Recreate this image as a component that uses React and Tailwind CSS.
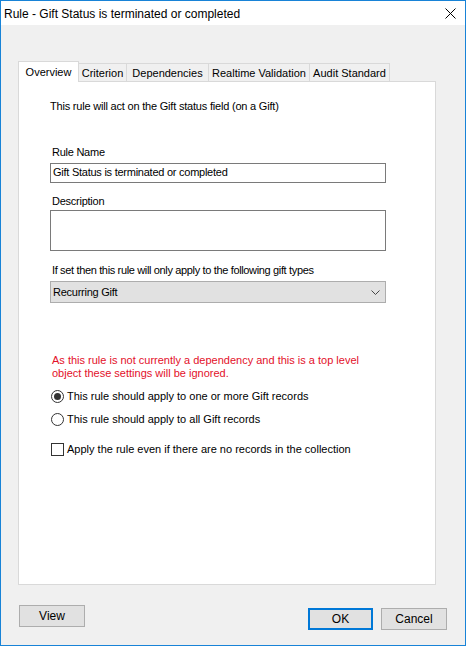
import React from "react";

const tabs = [
  { label: "Overview", w: "w-[61px]", active: true },
  { label: "Criterion", w: "w-[48px]" },
  { label: "Dependencies", w: "w-[82px]" },
  { label: "Realtime Validation", w: "w-[101px]" },
  { label: "Audit Standard", w: "w-[80px]" },
];

function Radio({ checked, label, className }) {
  return (
    <div className={`flex items-center h-[13px] ${className}`}>
      <span className="w-[13px] h-[13px] rounded-full border border-[#333] bg-white flex items-center justify-center ml-[1px]">
        {checked && <span className="w-[7px] h-[7px] rounded-full bg-[#333]" />}
      </span>
      <span className="ml-[3px]">{label}</span>
    </div>
  );
}

export default function App() {
  return (
    <div
      className="w-[466px] h-[646px] border border-[#1883d7] bg-[#f0f0f0] flex flex-col text-black"
      style={{ fontFamily: '"Liberation Sans", Arial, sans-serif' }}
    >
      {/* Title bar */}
      <div className="h-[24px] bg-white flex items-center justify-between pl-[3px] pr-[9px]">
        <span className="text-[12px] leading-[16px] mt-[1px]">
          Rule - Gift Status is terminated or completed
        </span>
        <svg width="11" height="11" viewBox="0 0 11 11" className="mt-[1px]">
          <path d="M0.5 0.5 L10.5 10.5 M10.5 0.5 L0.5 10.5" stroke="#000" strokeWidth="1" />
        </svg>
      </div>

      {/* Body */}
      <div className="flex-1 flex flex-col pl-[17px] pt-[36px] text-[11px] leading-[13px]">
        {/* Tabs */}
        <div className="flex items-end">
          {tabs.map((t) =>
            t.active ? (
              <div
                key={t.label}
                className={`${t.w} h-[21px] bg-white border-x border-t border-[#d9d9d9] relative z-10 -mb-px flex justify-center pt-[4px]`}
              >
                {t.label}
              </div>
            ) : (
              <div
                key={t.label}
                className={`${t.w} h-[18px] bg-[#f0f0f0] border-t border-r border-[#d9d9d9] flex justify-center pt-[3px]`}
              >
                {t.label}
              </div>
            )
          )}
        </div>

        {/* Panel */}
        <div className="w-[418px] h-[504px] bg-white border border-[#d9d9d9] flex flex-col pl-[31px] pt-[18px]">
          <div className="h-[13px] tracking-[-0.2px]">This rule will act on the Gift status field (on a Gift)</div>

          <div className="mt-[33px] ml-[2px] h-[13px] tracking-[-0.25px]">Rule Name</div>
          <div className="mt-[4px] w-[336px] h-[20px] border border-[#7a7a7a] pl-[2px] pt-[2px] tracking-[-0.25px]">
            Gift Status is terminated or completed
          </div>

          <div className="mt-[12px] ml-[2px] h-[13px] tracking-[-0.25px]">Description</div>
          <div className="mt-[2px] w-[336px] h-[41px] border border-[#7a7a7a]" />

          <div className="mt-[13px] ml-[2px] h-[13px] tracking-[-0.35px]">
            If set then this rule will only apply to the following gift types
          </div>
          <div className="mt-[4px] w-[336px] h-[22px] border border-[#adadad] bg-[#e1e1e1] flex items-center justify-between pl-[2px] pr-[5px]">
            <span className="tracking-[-0.25px]">Recurring Gift</span>
            <svg width="9" height="5" viewBox="0 0 9 5">
              <path d="M0.5 0.5 L4.5 4.5 L8.5 0.5" fill="none" stroke="#444" strokeWidth="1" />
            </svg>
          </div>

          <div className="mt-[51px] ml-[2px] text-[#e3102a]">
            As this rule is not currently a dependency and this is a top level
            <br />
            object these settings will be ignored.
          </div>

          <Radio checked label="This rule should apply to one or more Gift records" className="mt-[10px]" />
          <Radio label="This rule should apply to all Gift records" className="mt-[10px]" />

          <div className="mt-[17px] flex items-center h-[13px]">
            <span className="w-[13px] h-[13px] border border-[#333] bg-white ml-[1px]" />
            <span className="ml-[3px]">Apply the rule even if there are no records in the collection</span>
          </div>
        </div>

        {/* Buttons */}
        <div className="flex items-start pr-[18px]">
          <button className="mt-[20px] ml-[1px] w-[66px] h-[22px] bg-[#e1e1e1] border border-[#adadad] text-[12px] leading-[14px]">
            View
          </button>
          <div className="ml-auto mt-[23px] flex gap-[8px]">
            <button className="w-[65px] h-[22px] bg-[#e1e1e1] border-2 border-[#0078d7] text-[12px] leading-[14px]">
              OK
            </button>
            <button className="w-[66px] h-[22px] bg-[#e1e1e1] border border-[#adadad] text-[12px] leading-[14px]">
              Cancel
            </button>
          </div>
        </div>
      </div>
    </div>
  );
}
